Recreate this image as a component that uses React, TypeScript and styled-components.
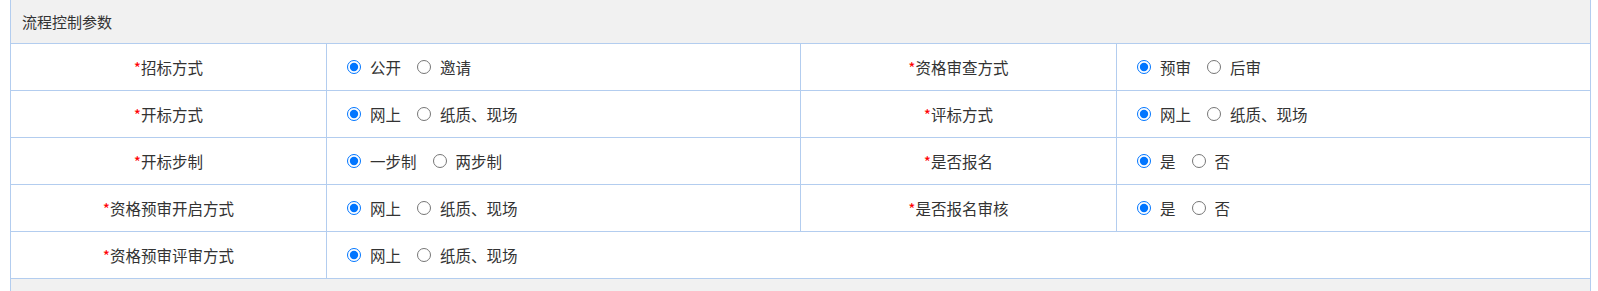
import React from "react";
import styled, { createGlobalStyle } from "styled-components";

const Global = createGlobalStyle`
  html, body { margin: 0; padding: 0; background: #ffffff; }
  body { font-family: "Noto Sans CJK SC", "Noto Sans", sans-serif; font-size: 16px; color: #333333; }
`;

const BORDER = "#b3cdef";

const Page = styled.div`
  padding-left: 10px;
  width: 1581px;
`;

const Panel = styled.div`
  background: #f1f1f1;
  padding-bottom: 13px;
  border-left: 1px solid ${BORDER};
  border-right: 1px solid ${BORDER};
  box-sizing: border-box;
  width: 1581px;
`;

const PanelTitle = styled.div`
  height: 43px;
  line-height: 43px;
  padding-left: 11px;
  font-size: 15px;
  color: #333333;
`;

const Table = styled.table`
  border-collapse: collapse;
  width: 1581px;
  margin-left: -1px;
  background: #ffffff;
  table-layout: fixed;
`;

const Cell = styled.td`
  border: 1px solid ${BORDER};
  height: 47px;
  padding: 0;
  box-sizing: border-box;
  vertical-align: middle;
  font-size: 15.5px;
  color: #333333;
`;

const LabelCell = styled(Cell)`
  text-align: center;
`;

const ValueCell = styled(Cell)`
  padding-left: 20px;
`;

const Required = styled.span`
  color: #ff0000;
`;

const Options = styled.div`
  display: flex;
  align-items: center;
`;

const Option = styled.label`
  display: inline-flex;
  align-items: center;
  margin-right: 16px;
  cursor: pointer;
`;

const Radio = styled.input.attrs({ type: "radio" })`
  width: 14px;
  height: 14px;
  margin: 0 9px 0 0;
  accent-color: #0075ff;
`;

type Field = { label: string; name: string; options: string[] };

const rows: Field[][] = [
  [
    { label: "招标方式", name: "zbfs", options: ["公开", "邀请"] },
    { label: "资格审查方式", name: "zgscfs", options: ["预审", "后审"] },
  ],
  [
    { label: "开标方式", name: "kbfs", options: ["网上", "纸质、现场"] },
    { label: "评标方式", name: "pbfs", options: ["网上", "纸质、现场"] },
  ],
  [
    { label: "开标步制", name: "kbbz", options: ["一步制", "两步制"] },
    { label: "是否报名", name: "sfbm", options: ["是", "否"] },
  ],
  [
    { label: "资格预审开启方式", name: "zgyskq", options: ["网上", "纸质、现场"] },
    { label: "是否报名审核", name: "sfbmsh", options: ["是", "否"] },
  ],
  [{ label: "资格预审评审方式", name: "zgyspx", options: ["网上", "纸质、现场"] }],
];

function FieldCells({ field, span }: { field: Field; span?: number }) {
  return (
    <>
      <LabelCell>
        <Required>*</Required>
        {field.label}
      </LabelCell>
      <ValueCell colSpan={span}>
        <Options>
          {field.options.map((o, i) => (
            <Option key={o}>
              <Radio name={field.name} defaultChecked={i === 0} />
              {o}
            </Option>
          ))}
        </Options>
      </ValueCell>
    </>
  );
}

export default function App() {
  return (
    <>
      <Global />
      <Page>
        <Panel>
          <PanelTitle>流程控制参数</PanelTitle>
          <Table>
            <colgroup>
              <col style={{ width: "20%" }} />
              <col style={{ width: "30%" }} />
              <col style={{ width: "20%" }} />
              <col style={{ width: "30%" }} />
            </colgroup>
            <tbody>
              {rows.map((r, i) => (
                <tr key={i}>
                  {r.map((f) => (
                    <FieldCells key={f.name} field={f} span={r.length === 1 ? 3 : undefined} />
                  ))}
                </tr>
              ))}
            </tbody>
          </Table>
        </Panel>
      </Page>
    </>
  );
}
